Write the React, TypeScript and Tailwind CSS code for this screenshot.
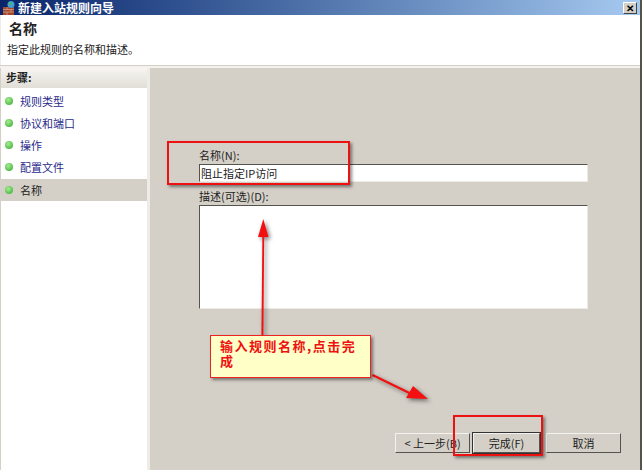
const steps = ["规则类型", "协议和端口", "操作", "配置文件", "名称"];

const font = { fontFamily: '"Noto Sans CJK SC", "Liberation Sans", sans-serif' };

function Step({ label, active }: { label: string; active: boolean }) {
  return (
    <div className={`flex h-[22px] items-center pl-[4px] text-[11px] ${active ? "bg-[#d4d0c8] text-[#222]" : "text-[#2a2a8c]"}`}>
      <span className="h-[8px] w-[8px] rounded-full bg-[radial-gradient(circle_at_40%_35%,#a8ec90,#2fa82f)]" />
      <span className="ml-[7px]">{label}</span>
    </div>
  );
}

function Button({ label, primary }: { label: string; primary?: boolean }) {
  return (
    <button className={`h-[20px] border border-t-[#f4f2ee] border-l-[#f4f2ee] border-r-[#55534e] border-b-[#55534e] bg-[#d4d0c8] text-[11px] leading-none text-[#222] ${primary ? "w-[67px] outline outline-1 outline-[#333]" : "w-[75px]"}`}>
      {label}
    </button>
  );
}

function Annotations() {
  return (
    <>
      <div className="absolute left-[167px] top-[141px] h-[44px] w-[183px] border-2 border-[#ee1111] shadow-[2px_2px_3px_rgba(0,0,0,0.45)]" />
      <div className="absolute left-[453px] top-[415px] h-[41px] w-[90px] border-2 border-[#ee1111] shadow-[2px_2px_3px_rgba(0,0,0,0.45)]" />
      <svg className="absolute left-0 top-0 drop-shadow-[2px_2px_2px_rgba(0,0,0,0.5)]" width="642" height="470" viewBox="0 0 642 470">
        <g fill="#f41010">
          <path d="M261.4 336 L262.4 234 L264.2 234 L263.4 336 Z" />
          <path d="M263.3 219 L268.5 237 L258 237 Z" />
          <path d="M373 374 L412 393 L411 395 L372 376 Z" />
          <path d="M428 399 L406 398 L413 386 Z" />
        </g>
      </svg>
      <div className="absolute left-[210px] top-[335px] h-[43px] w-[161px] border border-[#ee2222] bg-[#ffffc8] py-[2px] pl-[9px] pr-[6px] text-[13px] font-bold leading-[15px] tracking-[1.5px] text-[#ee1111] shadow-[2px_2px_3px_rgba(0,0,0,0.45)]">
        输入规则名称,点击完成
      </div>
    </>
  );
}

export default function App() {
  return (
    <div className="relative flex h-[470px] w-[642px] flex-col overflow-hidden border-r-2 border-[#55534e] bg-[#d4d0c8]" style={font}>
      <div className="flex h-[15px] items-center bg-gradient-to-r from-[#0a246a] to-[#a6caf0] pl-[3px] pr-[3px]">
        <svg width="12" height="14" viewBox="0 0 12 14">
          <rect x="0" y="6" width="11" height="8" fill="#a5482e" />
          <path d="M0 8.5h11M0 11h11M4 6v2.5M8 8.5V11M4 11v3" stroke="#d8a890" strokeWidth="0.7" />
          <circle cx="8" cy="3.5" r="3.5" fill="#3f9fd8" />
          <circle cx="7" cy="2.5" r="1.5" fill="#4fb860" />
        </svg>
        <span className="ml-[3px] text-[12px] font-bold leading-none text-white">新建入站规则向导</span>
        <span className="ml-auto flex h-[12px] w-[14px] items-center justify-center border border-t-white border-l-white border-r-[#444] border-b-[#444] bg-[#d4d0c8] text-[10px] font-bold leading-none text-black">
          ✕
        </span>
      </div>

      <div className="h-[50px] border-l border-[#efece6] bg-white pl-[8px] pt-[3px] text-[#222]">
        <div className="text-[14px] font-bold leading-[20px]">名称</div>
        <div className="-ml-[2px] mt-[3px] text-[11px] leading-[16px]">指定此规则的名称和描述。</div>
      </div>
      <div className="h-[3px] border-t border-[#d4d0c8] bg-[#f4f2ec]" />

      <div className="flex min-h-0 flex-1">
        <div className="ml-[1px] w-[146px] bg-white">
          <div className="flex h-[20px] items-center border-b border-[#e2dfd8] bg-gradient-to-b from-[#f6f5f2] to-[#e2dfd8] pl-[5px] text-[11px] font-bold text-[#222]">
            步骤:
          </div>
          <div className="pt-[2px]">
            {steps.map((s, i) => (
              <div key={s} className={i === 4 ? "pt-[1px]" : ""}>
                <Step label={s} active={i === 4} />
              </div>
            ))}
          </div>
        </div>
        <div className="w-[3px] bg-[#efece6]" />

        <div className="flex flex-1 flex-col pl-[49px] pr-[52px] pt-[79px] text-[11px] text-[#222]">
          <div className="leading-[17px]">名称(N):</div>
          <div className="flex h-[18px] items-center border border-t-[#55534e] border-l-[#55534e] border-r-[#eeeae4] border-b-[#eeeae4] bg-white pl-[1px] leading-none">
            阻止指定IP访问
          </div>
          <div className="mt-[5px] leading-[18px]">描述(可选)(D):</div>
          <div className="h-[104px] border border-t-[#55534e] border-l-[#55534e] border-r-[#eeeae4] border-b-[#eeeae4] bg-white" />
          <div className="-mr-[33px] mt-[124px] flex justify-end gap-[3px]">
            <Button label="< 上一步(B)" />
            <Button label="完成(F)" primary />
            <div className="ml-[3px]">
              <Button label="取消" />
            </div>
          </div>
        </div>
      </div>

      <Annotations />
    </div>
  );
}
